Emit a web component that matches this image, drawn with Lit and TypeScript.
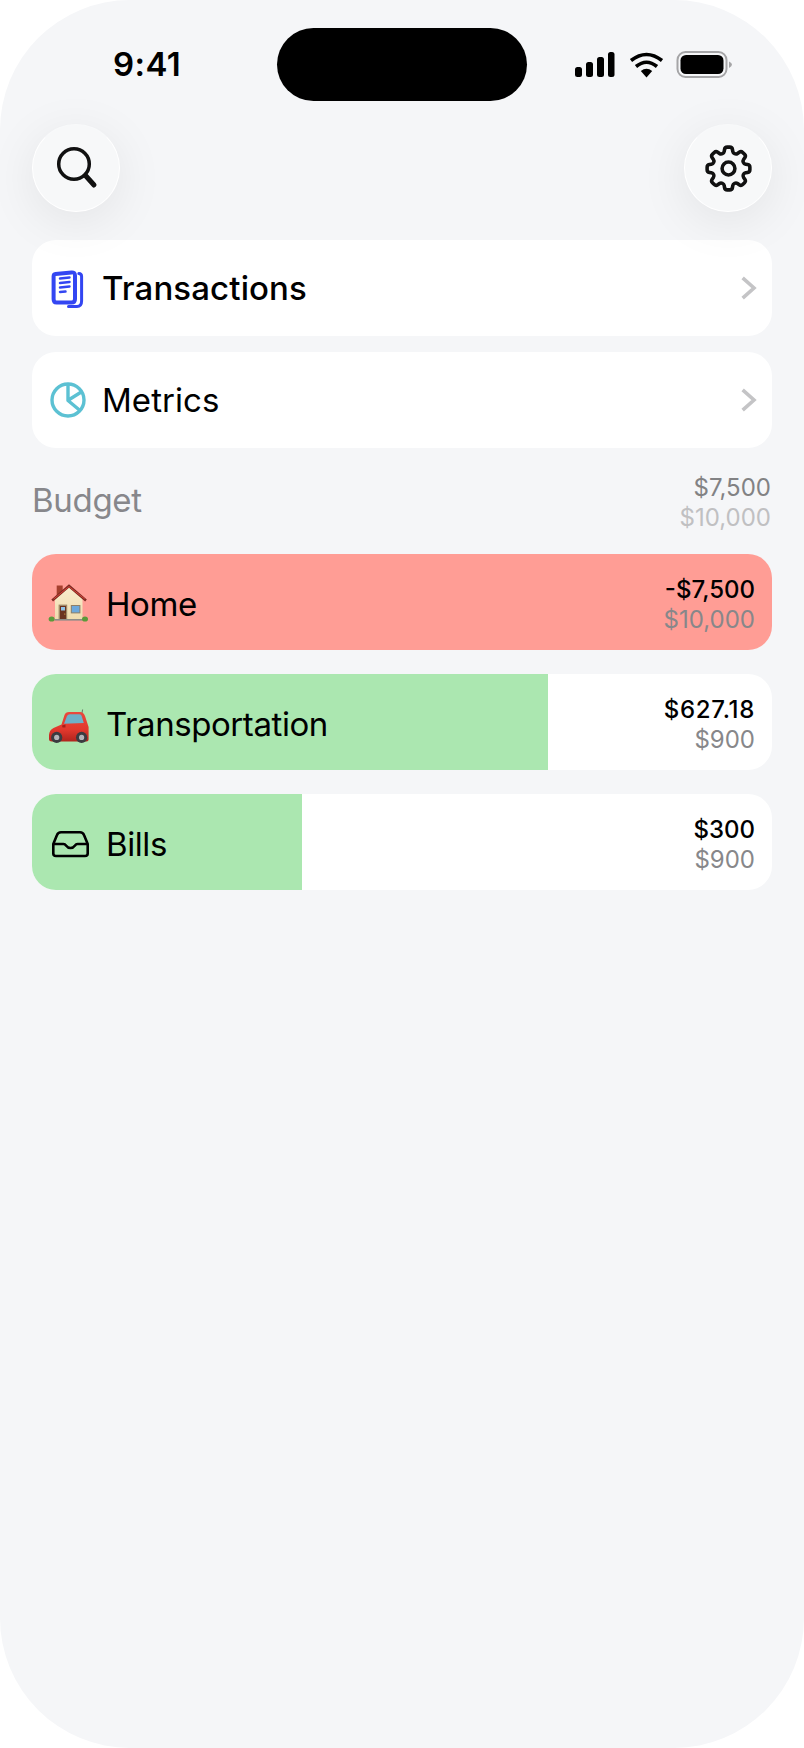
import { LitElement, html, css } from "lit";
import { customElement } from "lit/decorators.js";

const searchIcon = html`<svg class="ic48" viewBox="0 0 48 48" fill="none" stroke="#111" stroke-linecap="round"><circle cx="22" cy="20" r="15.3" stroke-width="3.5"/><path d="M33.5 31.5 42 41" stroke-width="5"/></svg>`;
const gearIcon = html`<svg class="gear" viewBox="0 0 24 24" fill="none" stroke="#111" stroke-width="1.5" stroke-linejoin="round"><path d="M10.343 3.94c.09-.542.56-.94 1.11-.94h1.093c.55 0 1.02.398 1.11.94l.149.894c.07.424.384.764.78.93.398.164.855.142 1.205-.108l.737-.527a1.125 1.125 0 0 1 1.45.12l.773.774c.39.389.44 1.002.12 1.45l-.527.737c-.25.35-.272.806-.107 1.204.165.397.505.71.93.78l.893.15c.543.09.94.559.94 1.109v1.094c0 .55-.397 1.02-.94 1.11l-.894.149c-.424.07-.764.383-.929.78-.165.398-.143.854.107 1.204l.527.738c.32.447.269 1.06-.12 1.45l-.774.773a1.125 1.125 0 0 1-1.449.12l-.738-.527c-.35-.25-.806-.272-1.203-.107-.398.165-.71.505-.781.929l-.149.894c-.09.542-.56.94-1.11.94h-1.094c-.55 0-1.019-.398-1.11-.94l-.148-.894c-.071-.424-.384-.764-.781-.93-.398-.164-.854-.142-1.204.108l-.738.527c-.447.32-1.06.269-1.45-.12l-.773-.774a1.125 1.125 0 0 1-.12-1.45l.527-.737c.25-.35.272-.806.108-1.204-.165-.397-.506-.71-.93-.78l-.894-.15c-.542-.09-.94-.56-.94-1.109v-1.094c0-.55.398-1.02.94-1.11l.894-.149c.424-.07.765-.383.93-.78.165-.398.143-.854-.108-1.204l-.526-.738a1.125 1.125 0 0 1 .12-1.45l.773-.773a1.125 1.125 0 0 1 1.45-.12l.737.527c.35.25.807.272 1.204.107.397-.165.71-.505.78-.929l.15-.894Z"/><circle cx="12" cy="12" r="2.7"/></svg>`;
const docIcon = html`<svg class="ic48" viewBox="0 0 48 48" fill="none" stroke="#3346f2" stroke-linecap="round" stroke-linejoin="round"><path stroke-width="4" d="M11.5 10 27.5 8.4Q31 8.1 31 11.4V35Q31 38.6 27.5 38.6H12.5Q9.6 38.6 9.6 35V12.5Q9.6 10.2 11.5 10Z"/><path stroke-width="2.5" d="M16 14.5 25.5 13.5M16 19 25.5 18M16 23.5 25.5 22.5M16 28 21.5 27.5"/><path stroke-width="3" d="M34.8 9.5Q37.6 9.5 37.6 12.5V37Q37.6 42.4 33 42.4H24.5"/></svg>`;
const pieIcon = html`<svg class="ic48" viewBox="0 0 48 48" fill="none" stroke="#5cc1d3" stroke-width="3.4" stroke-linecap="round" stroke-linejoin="round"><circle cx="24" cy="24" r="16"/><path d="M24 8.5V24.5L34.8 33.5M24.5 24 36.5 16.5"/></svg>`;
const houseIcon = html`<svg class="ic48" viewBox="0 0 48 48">
  <defs><linearGradient id="wall" x1="0" y1="0" x2="0" y2="1"><stop offset="0" stop-color="#f9eccd"/><stop offset="1" stop-color="#efdcae"/></linearGradient></defs>
  <rect x="12.7" y="7.5" width="6" height="10" fill="#a5402e"/>
  <path d="M11 20 25 9 38.5 20V41.5H11Z" fill="url(#wall)"/>
  <path d="M8.2 22.6 25 8 42 22.6" fill="none" stroke="#7d2a22" stroke-width="2.6"/>
  <path d="M9.6 21 25 8.6 40.8 21" fill="none" stroke="#d8443a" stroke-width="1"/>
  <rect x="14.6" y="26.6" width="8.6" height="15" fill="#a08a68"/>
  <rect x="16" y="28" width="6" height="13.6" fill="#6b3320"/>
  <rect x="17" y="29" width="4" height="3.5" fill="#8fc4e8"/>
  <circle cx="20.8" cy="36" r=".6" fill="#e8c04a"/>
  <rect x="26.8" y="27" width="9.6" height="8.4" fill="#8f8068"/>
  <rect x="27.8" y="28" width="7.6" height="6.4" fill="#6ca8dc"/>
  <rect x="10.5" y="41" width="28" height="1.6" fill="#8c8c88"/>
  <ellipse cx="7.6" cy="41" rx="3" ry="2.6" fill="#5c9a3a"/>
  <ellipse cx="41" cy="41" rx="3" ry="2.6" fill="#5c9a3a"/>
</svg>`;
const carIcon = html`<svg class="ic48" viewBox="0 0 48 48">
  <defs><linearGradient id="body" x1="0" y1="0" x2="0" y2="1"><stop offset="0" stop-color="#ea4a3c"/><stop offset=".6" stop-color="#e2382d"/><stop offset="1" stop-color="#b0241d"/></linearGradient></defs>
  <g transform="translate(0 6)">
  <path d="M38 9 38.6 5.5" stroke="#555" stroke-width=".8"/>
  <path d="M5 35V31Q5.3 26 9.5 24L17.5 20.5 20.5 11Q21.5 8 25 8H36Q39.5 8 41 12L44.6 23V35.5Q44.6 37.5 42.5 37.5H8Q5 37.5 5 35Z" fill="url(#body)"/>
  <path d="M20 19.8 23 12Q23.7 10.2 26 10.2H35.5Q37.2 10.2 37.7 12L39.8 19Z" fill="#6eb1c8"/>
  <path d="M18 21.5 21.5 20.5V23.5H18.5Z" fill="#a52019"/>
  <circle cx="12.7" cy="33.4" r="5.6" fill="#3b3b40"/><circle cx="12.7" cy="33.4" r="2.6" fill="#b4b4b8"/>
  <circle cx="37.6" cy="33.4" r="5.6" fill="#3b3b40"/><circle cx="37.6" cy="33.4" r="2.6" fill="#b4b4b8"/>
  </g>
</svg>`;
const trayIcon = html`<svg class="ic48" viewBox="0 0 48 48" fill="none" stroke="#000" stroke-width="2.6" stroke-linejoin="round"><g transform="translate(0 3)"><path d="M9.3 23V32.5Q9.3 35 12 35H41Q43.7 35 43.7 32.5V23L40 14Q39 11.3 36 11.3H17Q14 11.3 13 14Z"/><path d="M9.3 23H19.5Q21 23 22 24.5 23.8 27 26.5 27 29.2 27 31 24.5 32 23 33.5 23H43.7"/></g></svg>`;
const chevron = html`<svg class="chev" viewBox="0 0 16 24" fill="none" stroke="#c4c4c6" stroke-width="3.6" stroke-linecap="square"><path d="M3 3 13 12 3 21"/></svg>`;

interface Budget { name: string; icon: unknown; amount: string; total: string; pct: number; color: string; spacing: number; }
const budgets: Budget[] = [
  { name: "Home", icon: houseIcon, amount: "-$7,500", total: "$10,000", pct: 100, color: "#ff9d95", spacing: 0 },
  { name: "Transportation", icon: carIcon, amount: "$627.18", total: "$900", pct: 69.7, color: "#abe7b0", spacing: 0.7 },
  { name: "Bills", icon: trayIcon, amount: "$300", total: "$900", pct: 36.5, color: "#abe7b0", spacing: 0 },
];

@customElement("app-root")
export class AppRoot extends LitElement {
  static styles = css`
    :host { display: block; width: 804px; height: 1748px; background: #fff; font-family: Inter, "Liberation Sans", sans-serif; color: #000; }
    .frame { box-sizing: border-box; height: 1748px; background: #f5f6f8; border-radius: 130px; padding: 28px 32px 0; overflow: hidden; display: flex; flex-direction: column; }
    .status { display: flex; align-items: center; height: 73px; margin: 0 -32px; }
    .time { box-sizing: border-box; width: 277px; padding: 0 0 2px 113px; font-size: 33px; font-weight: 600; line-height: 58px; letter-spacing: 0.4px; }
    .island { width: 250px; height: 73px; border-radius: 37px; background: #000; }
    .sys { display: flex; align-items: center; padding-left: 48px; height: 73px; }
    .sys svg { display: block; }
    .top { display: flex; justify-content: space-between; margin-top: 23px; position: relative; z-index: 1; }
    .round { box-sizing: border-box; width: 88px; height: 88px; border-radius: 50%; background: #f7f8f9; border: 1.5px solid #fff; border-top-color: #f8f9fa; display: flex; align-items: center; justify-content: center; box-shadow: 0 10px 50px rgba(0,0,0,.08); }
    .ic48 { width: 48px; height: 48px; flex: none; display: block; }
    .gear { width: 57px; height: 57px; display: block; }
    .chev { width: 16px; height: 24px; display: block; flex: none; }
    .nav { margin-top: 28px; display: flex; flex-direction: column; gap: 16px; }
    .link { height: 96px; border-radius: 24px; background: #fff; display: flex; align-items: center; padding: 0 15px 0 12px; gap: 10px; }
    .link span { flex: 1; font-size: 33px; }
    .link.bold span { font-weight: 500; letter-spacing: .12px; }
    .link.med span { font-weight: 400; letter-spacing: .05px; }
    .head { display: flex; justify-content: space-between; align-items: center; margin: 25px 1px 21px 0; }
    .title { font-size: 33px; color: #87878b; padding-bottom: 6px; letter-spacing: -.3px; }
    .nums { font-size: 24px; line-height: 30px; text-align: right; }
    .val { font-weight: 500; color: #000; }
    .cap { color: #87878a; }
    .head .val { font-weight: 400; color: #828284; }
    .head .cap { color: #c0c0c2; }
    .list { display: flex; flex-direction: column; gap: 24px; }
    .row { display: grid; height: 96px; border-radius: 24px; overflow: hidden; background: #fff; }
    .row > * { grid-area: 1 / 1; }
    .fill { height: 100%; }
    .content { display: flex; align-items: center; justify-content: space-between; padding: 0 17px 0 12px; }
    .content .nums { padding-top: 6px; }
    .left { display: flex; align-items: center; gap: 14px; font-size: 33px; letter-spacing: -.42px; }
    .left span { padding-top: 4px; }
  `;

  render() {
    return html`<div class="frame">
      <div class="status">
        <div class="time">9:41</div>
        <div class="island"></div>
        <div class="sys">
          <svg width="157" height="30" viewBox="0 0 157 30">
            <g fill="#000">
              <rect x="0" y="17" width="7" height="10" rx="2.5"/><rect x="11" y="12" width="7" height="15" rx="2.5"/><rect x="22" y="7" width="7" height="20" rx="2.5"/><rect x="33" y="2" width="6.5" height="25" rx="2.5"/>
              <path d="M71.5 27.5 65.8 21Q71.5 16.6 77.2 21Z"/>
            </g>
            <g fill="none" stroke="#000" stroke-width="3.6"><path d="M61 16.5Q71.5 8 82 16.5"/><path d="M56 10.5Q71.5 -1.5 87 10.5"/></g>
            <rect x="102.5" y="2" width="49" height="25" rx="8" fill="none" stroke="#a5a5a7" stroke-width="2"/>
            <rect x="105.5" y="5" width="43" height="19" rx="5.5" fill="#000"/>
            <path d="M154 11.5Q157 13 157 14.5T154 18Z" fill="#a5a5a7"/>
          </svg>
        </div>
      </div>
      <div class="top">
        <div class="round">${searchIcon}</div>
        <div class="round">${gearIcon}</div>
      </div>
      <div class="nav">
        <div class="link bold">${docIcon}<span>Transactions</span>${chevron}</div>
        <div class="link med">${pieIcon}<span>Metrics</span>${chevron}</div>
      </div>
      <div class="head">
        <div class="title">Budget</div>
        <div class="nums"><div class="val">$7,500</div><div class="cap">$10,000</div></div>
      </div>
      <div class="list">
        ${budgets.map(b => html`<div class="row">
          <div class="fill" style="width:${b.pct}%;background:${b.color}"></div>
          <div class="content">
            <div class="left">${b.icon}<span>${b.name}</span></div>
            <div class="nums"><div class="val" style="letter-spacing:${b.spacing}px">${b.amount}</div><div class="cap">${b.total}</div></div>
          </div>
        </div>`)}
      </div>
    </div>`;
  }
}
